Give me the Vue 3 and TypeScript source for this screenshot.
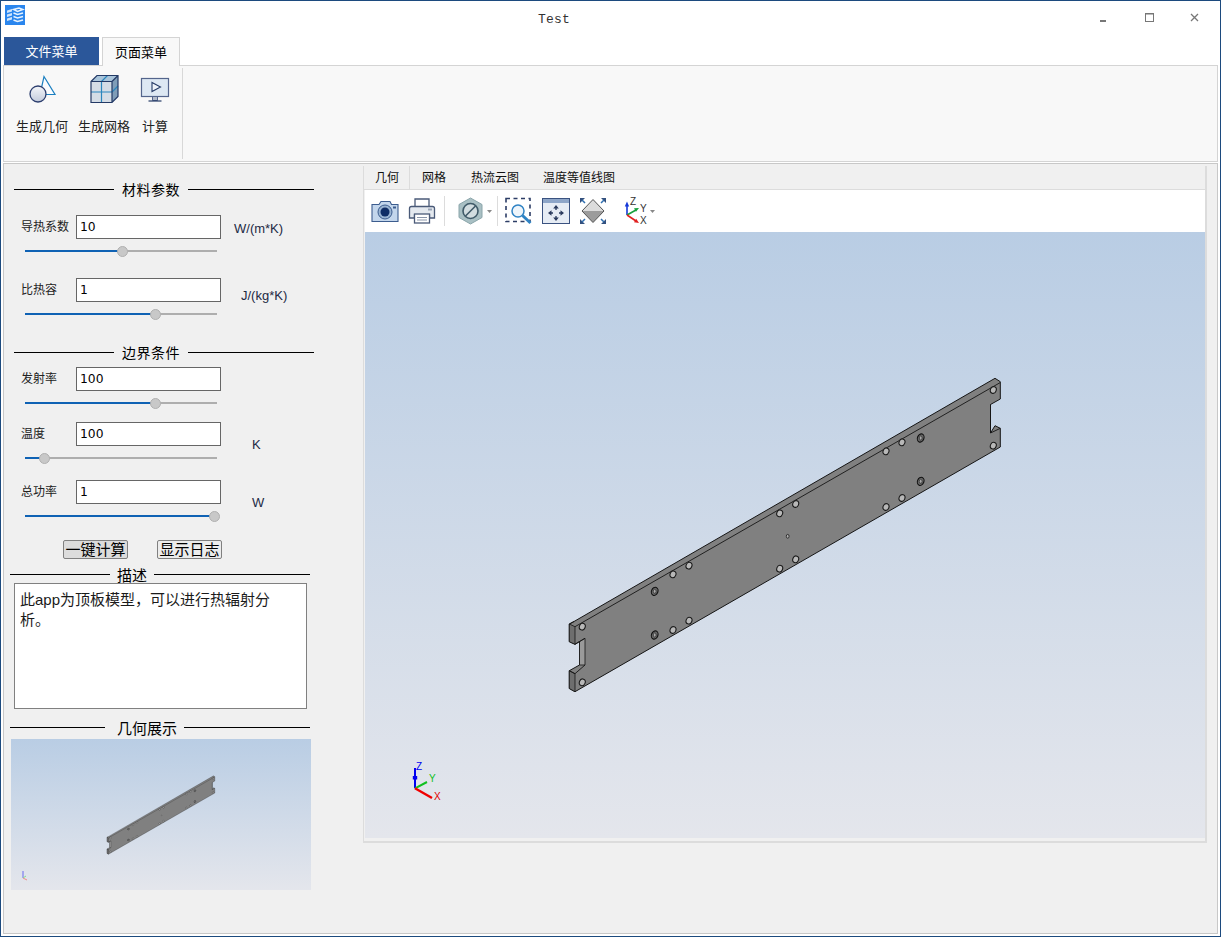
<script setup lang="ts">
interface ParamRow {
  label: string
  value: string
  unit: string
  pct: number
  cls: string
}

const materialRows: ParamRow[] = [
  { label: '导热系数', value: '10', unit: 'W/(m*K)', pct: 50.5, cls: 'r1' },
  { label: '比热容', value: '1', unit: 'J/(kg*K)', pct: 67.5, cls: 'r2' },
]

const boundaryRows: ParamRow[] = [
  { label: '发射率', value: '100', unit: '', pct: 67.5, cls: 'r3' },
  { label: '温度', value: '100', unit: 'K', pct: 10, cls: 'r4' },
  { label: '总功率', value: '1', unit: 'W', pct: 98.5, cls: 'r5' },
]

const viewTabs = ['几何', '网格', '热流云图', '温度等值线图']

// 孔的位置都是屏幕坐标
const holes = [
  [582.3, 626.7], [582.3, 682.3], [673, 574.3], [689, 565.7], [673, 630], [689, 620.7],
  [779.7, 513.3], [795.7, 504], [779.7, 568.7], [795.7, 559.3],
  [993.3, 390], [993.3, 445.7], [886, 451.3], [902, 442.3], [886, 507], [902, 498],
]
const darkHoles = [[654.7, 591.3], [654.7, 635], [920.7, 438], [920.7, 481.3]]

const outline = '569.3,624 574,621.5 995,378.3 1000.3,381.7 1000.3,399 990.5,404.5 990.5,433 995,425.7 1000.3,428.3 1000.3,447 575,691.7 569.3,688.5 569.3,670.7 579.5,665 579.5,641.5 575,644.3 569.3,641.7'
</script>

<template>
  <div class="win">
    <div class="titlebar">
      <svg class="app-icon" width="20" height="20" viewBox="0 0 20 20">
        <rect width="20" height="20" fill="#2a86ee" />
        <path d="M2 5.500 7 4v2.500L2 8zM2 9.500l5-1.500v2.500L2 12zM2 13.500 7 12v2.500L2 16z" fill="#cfe4fb" />
        <path d="M8.500 4.500 14 3l4 1.500-5.500 2zM8.500 8l4 1.500L18 8M8.500 11.500l4 1.500 5.500-1.500M8.500 15l4 1.500L18 15" fill="none" stroke="#e8f3ff" stroke-width="1.500" />
      </svg>
      <span class="title">Test</span>
      <div class="win-btns">
        <svg width="12" height="12" viewBox="0 0 12 12"><rect x="1" y="8" width="6" height="2" fill="#777" /></svg>
        <svg width="12" height="12" viewBox="0 0 12 12"><rect x="1.500" y="1.500" width="8" height="8" fill="none" stroke="#777" /><path d="M1 2h9" stroke="#777" /></svg>
        <svg width="12" height="12" viewBox="0 0 12 12"><path d="M2 2l7 7M9 2l-7 7" stroke="#777" stroke-width="1.300" fill="none" /></svg>
      </div>
    </div>

    <div class="menu-tabs">
      <div class="menu-tab file">文件菜单</div>
      <div class="menu-tab active">页面菜单</div>
    </div>

    <div class="ribbon">
      <div class="ribbon-group">
        <div class="ribbon-btn">
          <svg width="32" height="32" viewBox="0 0 32 32">
            <defs>
              <linearGradient id="ballFill" x1="0" y1="0" x2="0" y2="1">
                <stop offset="0" stop-color="#f4f6fa" />
                <stop offset="1" stop-color="#c3cbdc" />
              </linearGradient>
            </defs>
            <path d="M18 2.500 29 20.500H14z" fill="#fafcfe" stroke="#1b7fc0" stroke-width="1.200" />
            <circle cx="12" cy="20" r="8" fill="url(#ballFill)" stroke="#2c3e6e" stroke-width="1.300" />
          </svg>
          <span>生成几何</span>
        </div>
        <div class="ribbon-btn">
          <svg width="32" height="32" viewBox="0 0 32 32">
            <path d="M3 7.500 9 1.500h21v21l-6 6H3z" fill="#dfe7ef" />
            <path d="M3 7.500h21l6-6H9z" fill="#a9c4da" />
            <path d="M24 7.500 30 1.500v21l-6 6z" fill="#7f9db8" />
            <rect x="3" y="7.500" width="21" height="21" fill="#d5dde6" />
            <path d="M3 18h21M13.500 7.500v21M13.500 7.500l6-6M24 18l6-6" stroke="#2b86bd" stroke-width="1.200" fill="none" />
            <path d="M3 7.500 9 1.500h21v21l-6 6H3zM3 7.500h21v21M24 7.500l6-6" stroke="#243a66" stroke-width="1.200" fill="none" />
          </svg>
          <span>生成网格</span>
        </div>
        <div class="ribbon-btn compute">
          <svg width="32" height="32" viewBox="0 0 32 32">
            <rect x="2.500" y="4.500" width="27" height="18" fill="#dde8f3" stroke="#54658c" stroke-width="1.200" />
            <path d="M13 8.500 21.500 13 13 17.500z" fill="#eef3f9" stroke="#243a66" stroke-width="1.100" />
            <path d="M13.500 23v3.500h5V23" fill="#b4bdcc" stroke="#54658c" />
            <path d="M9.500 27h13" stroke="#243a66" stroke-width="1.200" />
          </svg>
          <span>计算</span>
        </div>
      </div>
    </div>

    <div class="main">
      <aside class="side">
        <div class="heading first"><i></i><span>材料参数</span><i></i></div>
        <div v-for="row in materialRows" :key="row.label" class="row" :class="row.cls">
          <label>{{ row.label }}</label>
          <input type="text" readonly :value="row.value" />
          <span class="unit">{{ row.unit }}</span>
          <div class="slider">
            <div class="slider-on" :style="{ width: row.pct + '%' }"></div>
            <div class="slider-thumb" :style="{ left: row.pct + '%' }"></div>
          </div>
        </div>

        <div class="heading boundary"><i></i><span>边界条件</span><i></i></div>
        <div v-for="row in boundaryRows" :key="row.label" class="row" :class="row.cls">
          <label>{{ row.label }}</label>
          <input type="text" readonly :value="row.value" />
          <span class="unit">{{ row.unit }}</span>
          <div class="slider">
            <div class="slider-on" :style="{ width: row.pct + '%' }"></div>
            <div class="slider-thumb" :style="{ left: row.pct + '%' }"></div>
          </div>
        </div>

        <div class="actions">
          <button type="button">一键计算</button>
          <button type="button">显示日志</button>
        </div>

        <div class="heading wide desc-head"><i></i><span>描述</span><i></i></div>
        <div class="desc">此app为顶板模型，可以进行热辐射分析。</div>

        <div class="heading wide geo-head"><i></i><span>几何展示</span><i></i></div>
        <div class="thumb">
          <svg width="300" height="151" viewBox="0 0 300 151">
            <use href="#plate" transform="translate(-46.250 -57.750) scale(.25)" />
            <path d="M12 132v7" stroke="#6a6af0" stroke-width="1" />
            <path d="M12 139l3-2" stroke="#7fe08a" stroke-width="1" />
            <path d="M12 139l4 2" stroke="#f08a8a" stroke-width="1" />
          </svg>
        </div>
      </aside>

      <section class="pane">
        <div class="view-tabs">
          <div v-for="(tab, i) in viewTabs" :key="tab" class="view-tab" :class="{ current: i === 0 }">{{ tab }}</div>
        </div>
        <div class="toolbar">
          <!-- 相机 -->
          <svg width="28" height="28" viewBox="0 0 28 28">
            <path d="M1 7.500h7l2-3h9l1.500 3H27v17H1z" fill="#c3d6ec" stroke="#3c5c8e" stroke-width="1.100" />
            <circle cx="14" cy="15" r="7" fill="#9ab4d2" stroke="#3c5c8e" />
            <circle cx="14" cy="15" r="4.500" fill="#0f2d66" />
            <rect x="22" y="9.500" width="3" height="2" fill="#3c5c8e" />
          </svg>
          <!-- 打印机 -->
          <svg class="m-print" width="28" height="28" viewBox="0 0 28 28">
            <path d="M7 10V2h14v8" fill="#fff" stroke="#4a5a78" stroke-width="1.300" />
            <path d="M1.500 11.500q0-2 2-2h21q2 0 2 2V21h-5v-3h-15v3h-5z" fill="#e4e9ef" stroke="#4a5a78" stroke-width="1.300" />
            <rect x="6.500" y="17" width="15" height="9" fill="#fff" stroke="#4a5a78" stroke-width="1.300" />
            <path d="M9 20.500h10M9 23h10" stroke="#8a96aa" />
            <path d="M20 12.500h4" stroke="#9aa5b6" stroke-width="2" />
          </svg>
          <div class="sep"></div>
          <!-- 剖切 -->
          <svg class="m-hex" width="34" height="28" viewBox="0 0 34 28">
            <path d="M12.500 1 24 7.500v13L12.500 27 1 20.500v-13z" fill="#a9c0c4" stroke="#8aa5aa" />
            <circle cx="12.500" cy="14" r="7.500" fill="#d2dde0" stroke="#3f5a68" stroke-width="1.600" />
            <path d="M7.500 19 17.500 9" stroke="#3f5a68" stroke-width="1.600" />
            <path d="M29 13h5l-2.500 3z" fill="#888" />
          </svg>
          <div class="sep s2"></div>
          <!-- 框选缩放 -->
          <svg width="28" height="28" viewBox="0 0 28 28">
            <rect x="1" y="1.500" width="24" height="23" fill="none" stroke="#2c3d66" stroke-width="1.600" stroke-dasharray="4 3.500" />
            <circle cx="13" cy="14" r="6" fill="#eef5fb" stroke="#2f83c4" stroke-width="1.500" />
            <path d="M17.500 18.500l8 7.500" stroke="#2f83c4" stroke-width="3" />
          </svg>
          <!-- 平移 -->
          <svg width="28" height="28" viewBox="0 0 28 28">
            <rect x=".5" y="1.500" width="27" height="25" fill="#e6ecf4" stroke="#3a5280" />
            <rect x="1" y="2" width="26" height="4" fill="#8ea6c8" />
            <path d="M14 9.500v3.500M14 19v3.500M7.500 16H11M17 16h3.500" stroke="#2a3a5c" stroke-width="1.300" />
            <path d="M14 8l-2.800 3.500h5.600zM14 24l-2.800-3.500h5.600zM6 16l3.500-2.800v5.600zM22 16l-3.500-2.800v5.600z" fill="#2a3a5c" />
          </svg>
          <!-- 适配 -->
          <svg class="m-fit" width="28" height="28" viewBox="0 0 28 28">
            <path d="M14 2.500 25 14H3z" fill="#dcdcdc" />
            <path d="M3 14h22L14 25.500z" fill="#9c9c9c" />
            <path d="M14 2.500 25 14 14 25.500 3 14z" fill="none" stroke="#555" />
            <path d="M1 1h5L1 6zM27 1h-5l5 5zM1 27h5l-5-5zM27 27h-5l5-5z" fill="#33507e" />
            <path d="M3 3l3 3M25 3l-3 3M3 25l3-3M25 25l-3-3" stroke="#2f6fb0" stroke-width="1.500" />
          </svg>
          <!-- 坐标轴 -->
          <svg class="m-axes" width="32" height="28" viewBox="0 0 32 28">
            <path d="M3 18V7" stroke="#1438d8" stroke-width="1.600" />
            <path d="M3 4.500.8 9.500h4.400z" fill="#1438d8" />
            <path d="M3 18l9-5" stroke="#16a03c" stroke-width="1.600" />
            <path d="M15 11l-5 .2 2 3.600z" fill="#16a03c" />
            <path d="M3 18l9 6" stroke="#e02020" stroke-width="1.600" />
            <path d="M15 26l-5-.8 2.200-3.400z" fill="#e02020" />
            <text x="6" y="8" class="axis-lbl">Z</text>
            <text x="16" y="15" class="axis-lbl">Y</text>
            <text x="16" y="27" class="axis-lbl">X</text>
            <path d="M26 13h5l-2.500 3z" fill="#888" />
          </svg>
        </div>
        <div class="view3d">
          <svg width="840" height="606" viewBox="365 232 840 606">
            <g id="plate">
              <polygon :points="outline" fill="#808080" stroke="#151515" stroke-width="1" />
              <polygon points="569.300,624 575,626.700 575,644.300 569.300,641.700" fill="#6e6e6e" stroke="#151515" stroke-width=".8" />
              <polygon points="569.300,670.700 575,673.700 575,691.700 569.300,688.500" fill="#6e6e6e" stroke="#151515" stroke-width=".8" />
              <polygon points="579.500,641.500 585,638.300 585,665 579.500,665" fill="#9a9a9a" stroke="#151515" stroke-width=".8" />
              <path d="M575 626.700 1000 382.700M574 621.500 569.300 624M569.300 670.700 575 673.700 585 665M575 644.300 585 638.300M990.500 404.500V433M990.500 433 1000.300 428.300" fill="none" stroke="#151515" stroke-width=".9" />
              <ellipse v-for="h in holes" :key="h[0] + '-' + h[1]" :cx="h[0]" :cy="h[1]" rx="2.900" ry="3.400" :transform="`rotate(22 ${h[0]} ${h[1]})`" fill="#b8b8b8" stroke="#1a1a1a" stroke-width="1.100" />
              <g v-for="h in darkHoles" :key="h[0] + '-' + h[1]">
                <ellipse :cx="h[0]" :cy="h[1]" rx="3.200" ry="4.200" :transform="`rotate(22 ${h[0]} ${h[1]})`" fill="#666" stroke="#111" stroke-width="1.100" />
                <ellipse :cx="h[0]" :cy="h[1]" rx="1.400" ry="2" fill="#aaa" stroke="#222" stroke-width=".6" />
              </g>
              <ellipse cx="787.700" cy="536.300" rx="1.400" ry="1.900" fill="#b0b0b0" stroke="#1a1a1a" stroke-width=".8" />
            </g>
            <path d="M415 788.300V768" stroke="#0000f0" stroke-width="2" />
            <path d="M412.800 776h4.400v3.500h-4.400z" fill="#0000f0" />
            <path d="M415 788.300 427 782" stroke="#10c020" stroke-width="2" />
            <path d="M415 788.300 432 798" stroke="#f00000" stroke-width="2.400" />
            <text x="416" y="770" class="axis-blue">Z</text>
            <text x="429" y="782" class="axis-green">Y</text>
            <text x="434" y="800" class="axis-red">X</text>
          </svg>
        </div>
      </section>
    </div>
  </div>
</template>

<style>
html,
body {
  margin: 0;
  background: #f0f0f0;
}
</style>

<style scoped>
.win {
  width: 1221px;
  height: 937px;
  box-sizing: border-box;
  border: 1px solid #1c4a7e;
  background: #fff;
  font-family: "Liberation Sans", "Noto Sans CJK SC", sans-serif;
  font-size: 12px;
  color: #000;
  display: flex;
  flex-direction: column;
  overflow: hidden;
}

.titlebar {
  height: 36px;
  flex: none;
  display: flex;
  align-items: flex-start;
  position: relative;
}

.app-icon {
  margin: 4px 0 0 4px;
}

.title {
  position: absolute;
  left: 537px;
  top: 11px;
  font-family: "Liberation Mono", monospace;
  font-size: 13px;
  letter-spacing: .2px;
  color: #333;
}

.win-btns {
  margin-left: auto;
  margin-top: 11px;
  margin-right: 19px;
  display: flex;
  gap: 33px;
}

.menu-tabs {
  height: 29px;
  flex: none;
  display: flex;
  padding-left: 3px;
  gap: 3px;
}

.menu-tab {
  font-size: 13px;
  line-height: 29px;
  text-align: center;
  box-sizing: border-box;
}

.menu-tab.file {
  width: 95px;
  background: #2b579a;
  color: #fff;
}

.menu-tab.active {
  width: 78px;
  background: #f8f8f8;
  border: 1px solid #d4d4d4;
  border-bottom: none;
  position: relative;
  z-index: 1;
}

.ribbon {
  height: 97px;
  flex: none;
  box-sizing: border-box;
  margin: -1px 2px 0 2px;
  background: #f8f8f8;
  border: 1px solid #d4d4d4;
  padding-top: 2px;
}

.ribbon-group {
  width: 179px;
  height: 91px;
  box-sizing: border-box;
  border-right: 1px solid #d8d8d8;
  padding: 6px 0 0 12px;
  display: flex;
  gap: 10px;
}

.ribbon-btn {
  display: flex;
  flex-direction: column;
  align-items: center;
  font-size: 13px;
  color: #222;
}

.ribbon-btn span {
  margin-top: 12px;
  line-height: 18px;
}

.ribbon-btn.compute {
  margin-left: -1px;
}

.main {
  flex: 1;
  min-height: 0;
  margin: 1px 2px 2px 2px;
  border: 1px solid #c8c8c8;
  background: #f0f0f0;
  display: flex;
  align-items: flex-start;
}

.side {
  width: 359px;
  flex: none;
  padding-top: 15px;
}

.heading {
  height: 20px;
  width: 300px;
  margin-left: 10px;
  display: flex;
  align-items: center;
  gap: 8px;
  font-size: 14px;
  letter-spacing: .5px;
}

.heading i {
  flex: 1;
  height: 1px;
  background: #000;
}

.heading i:first-child {
  flex: none;
  width: 100px;
}

.heading.wide {
  margin-left: 6px;
  font-size: 15px;
  letter-spacing: 0;
  gap: 7px;
}

.heading.first {
  margin-bottom: 16px;
}

.heading.boundary {
  margin-top: 23px;
  margin-bottom: 5px;
}

.desc-head {
  margin-top: 5px;
}

.geo-head {
  margin-top: 8px;
  margin-bottom: 2px;
}

.geo-head i:first-child {
  width: 95px;
  margin-right: 5px;
}

.row {
  margin-left: 17px;
  display: grid;
  grid-template-columns: 55px 145px 1fr;
  grid-template-rows: 24px 17px;
}

.row label {
  font-size: 12px;
  line-height: 24px;
  color: #222;
}

.row input {
  width: 145px;
  height: 24px;
  box-sizing: border-box;
  border: 1px solid #666;
  background: #fff;
  padding: 0 3px;
  font-family: "DejaVu Sans", sans-serif;
  font-size: 12.3px;
  outline: none;
}

.unit {
  font-size: 13px;
  line-height: 16px;
  color: #1c2a44;
  white-space: nowrap;
}

.r1 {
  margin-bottom: 22px;
}

.r1 .unit {
  margin: 6px 0 0 13px;
}

.r2 .unit {
  margin: 10px 0 0 20px;
}

.r3 {
  margin-bottom: 14px;
}

.r4 {
  margin-bottom: 17px;
}

.r4 .unit,
.r5 .unit {
  margin: 15px 0 0 31px;
}

.slider {
  grid-column: 1 / -1;
  position: relative;
  width: 192px;
  height: 2px;
  margin: 11px 0 0 4px;
  background: #aeaeae;
}

.slider-on {
  height: 100%;
  background: #0f62b4;
}

.slider-thumb {
  position: absolute;
  top: -4px;
  width: 9px;
  height: 9px;
  margin-left: -5px;
  border: 1px solid #b0b0b0;
  border-radius: 50%;
  background: #c8c8c8;
}

.actions {
  margin: 19px 0 0 59px;
  display: flex;
  gap: 29px;
}

.actions button {
  width: 65px;
  height: 19px;
  box-sizing: border-box;
  padding: 0;
  border: 1px solid #808080;
  border-radius: 2px;
  background: #dcdcdc;
  font-family: inherit;
  font-size: 15px;
  line-height: 17px;
  color: #000;
}

.actions button:last-child {
  background: #ececec;
}

.desc {
  margin: -1px 0 0 10px;
  width: 293px;
  height: 126px;
  box-sizing: border-box;
  border: 1px solid #808080;
  background: #fff;
  padding: 6px 20px 0 5px;
  font-size: 15px;
  line-height: 20px;
  color: #1a1a1a;
}

.thumb {
  margin-left: 7px;
  width: 300px;
  height: 151px;
  background: linear-gradient(#b9cde4, #e4e6ec);
}

.thumb svg,
.view3d svg {
  display: block;
}

.pane {
  width: 844px;
  height: 677px;
  flex: none;
  margin-top: 2px;
  box-sizing: border-box;
  border-style: solid;
  border-color: #dcdcdc;
  border-width: 0 2px 2px 1px;
  padding: 0 0 3px 1px;
  display: flex;
  flex-direction: column;
}

.view-tabs {
  height: 24px;
  flex: none;
  margin-left: -1px;
  display: flex;
  border-bottom: 1px solid #dcdcdc;
  box-sizing: border-box;
}

.view-tab {
  padding: 0 12px;
  line-height: 24px;
  font-size: 12px;
  color: #111;
}

.view-tab.current {
  border-right: 1px solid #dcdcdc;
  padding: 0 10px 0 11px;
}

.view-tab:nth-child(3) {
  margin-left: 1px;
}

.toolbar {
  height: 42px;
  flex: none;
  width: 840px;
  background: #fff;
  display: flex;
  align-items: center;
  padding-left: 6px;
  box-sizing: border-box;
  gap: 9px;
}

.m-print {
  margin-right: -1px;
}

.sep {
  width: 1px;
  height: 30px;
  background: #dcdcdc;
  margin-right: 4px;
}

.sep.s2 {
  margin-left: -4px;
  margin-right: -2px;
}

.m-fit {
  margin-right: 8px;
}

.axis-lbl {
  font-family: "Liberation Sans", sans-serif;
  font-size: 10px;
  fill: #333;
}

.axis-blue,
.axis-green,
.axis-red {
  font-family: "Liberation Sans", sans-serif;
  font-size: 10px;
}

.axis-blue {
  fill: #0000f0;
}

.axis-green {
  fill: #10c020;
}

.axis-red {
  fill: #e00000;
}

.view3d {
  width: 840px;
  height: 606px;
  flex: none;
  background: linear-gradient(#b9cde4, #e4e6ec);
}
</style>
